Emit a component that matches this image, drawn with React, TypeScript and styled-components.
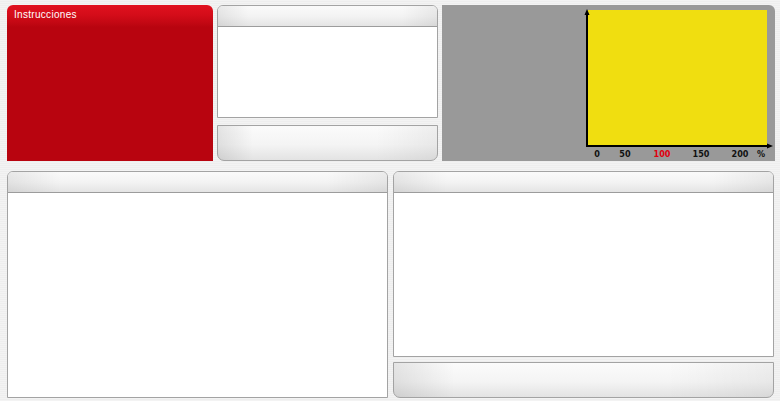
import React from "react";
import styled, { createGlobalStyle } from "styled-components";

const Global = createGlobalStyle`
  html, body { margin: 0; padding: 0; }
  body {
    width: 780px;
    height: 401px;
    overflow: hidden;
    font-family: "Liberation Sans", Arial, sans-serif;
    background: repeating-linear-gradient(to bottom, #f3f3f3 0px, #f3f3f3 1px, #eeeeee 1px, #eeeeee 2px);
  }
`;

const Page = styled.div`
  display: flex;
  flex-direction: column;
  gap: 10px;
  padding: 5px 0 0 7px;
  width: 780px;
  box-sizing: border-box;
`;

const TopRow = styled.div`
  display: flex;
  height: 156px;
`;

const BottomRow = styled.div`
  display: flex;
  gap: 5px;
  height: 227px;
`;

const RedPanel = styled.div`
  width: 206px;
  border-radius: 6px 6px 0 0;
  background: linear-gradient(to bottom, #e0111f 0px, #d40c19 10px, #c00712 19px, #b8040f 22px, #b8040f 100%);
  overflow: hidden;
`;

const RedTitle = styled.div`
  color: #ffffff;
  font-size: 10px;
  font-weight: normal;
  letter-spacing: 0.3px;
  padding: 4px 0 0 7px;
  line-height: 12px;
`;

const MidColumn = styled.div`
  width: 221px;
  margin-left: 4px;
  display: flex;
  flex-direction: column;
  gap: 7px;
`;

const Card = styled.div<{ $grow?: boolean; $w?: number }>`
  box-sizing: border-box;
  display: flex;
  flex-direction: column;
  border: 1px solid #a3a3a3;
  border-radius: 6px 6px 0 0;
  background: #ffffff;
  ${(p) => (p.$grow ? "flex: 1;" : "")}
  ${(p) => (p.$w ? `width: ${p.$w}px;` : "")}
  overflow: hidden;
`;

const CardHeader = styled.div`
  height: 20px;
  flex-shrink: 0;
  border-bottom: 1px solid #9c9c9c;
  background:
    linear-gradient(to right, rgba(0, 0, 0, 0.07) 0%, rgba(0, 0, 0, 0) 14%, rgba(0, 0, 0, 0) 84%, rgba(0, 0, 0, 0.06) 100%),
    linear-gradient(to bottom, #fafafa 0%, #f3f3f3 50%, #e4e4e4 100%);
`;

const CardBody = styled.div`
  flex: 1;
  background: #ffffff;
`;

const Bar = styled.div<{ $h: number }>`
  box-sizing: border-box;
  height: ${(p) => p.$h}px;
  border: 1px solid #a3a3a3;
  border-radius: 0 0 7px 7px;
  background:
    linear-gradient(to right, rgba(0, 0, 0, 0.09) 0%, rgba(0, 0, 0, 0) 16%, rgba(0, 0, 0, 0) 72%, rgba(0, 0, 0, 0.05) 100%),
    linear-gradient(to bottom, #fbfbfb 0%, #f4f4f4 55%, #e3e3e3 100%);
`;

const GrayPanel = styled.div`
  width: 333px;
  margin-left: 4px;
  background: #999999;
  border-radius: 0 6px 0 0;
  display: flex;
  justify-content: flex-end;
`;

const ChartSvg = styled.svg`
  display: block;
  flex-shrink: 0;
`;

const Label = styled.text<{ $red?: boolean }>`
  font-family: "DejaVu Sans Condensed", "Liberation Sans Narrow", "Liberation Sans", sans-serif;
  font-weight: bold;
  font-size: 9px;
  fill: ${(p) => (p.$red ? "#e0000f" : "#111111")};
`;

const RightColumn = styled.div`
  width: 381px;
  display: flex;
  flex-direction: column;
  gap: 5px;
`;

const Chart = () => {
  const labels: { t: string; x: number; red?: boolean }[] = [
    { t: "0", x: 17 },
    { t: "50", x: 45 },
    { t: "100", x: 82, red: true },
    { t: "150", x: 121 },
    { t: "200", x: 160 },
    { t: "%", x: 181 },
  ];
  return (
    <ChartSvg width={195} height={156} viewBox="0 0 195 156">
      <rect x={8} y={5} width={179} height={136} fill="#f0de10" />
      <line x1={7} y1={8} x2={7} y2={142} stroke="#000" strokeWidth={2} />
      <line x1={6} y1={141} x2={189} y2={141} stroke="#000" strokeWidth={2} />
      <polygon points="7,4 4.5,10 9.5,10" fill="#000" />
      <polygon points="193,141 187,138.5 187,143.5" fill="#000" />
      {labels.map((l) => (
        <Label key={l.t} x={l.x} y={152} textAnchor="middle" $red={l.red}>
          {l.t}
        </Label>
      ))}
    </ChartSvg>
  );
};

export default function App() {
  return (
    <>
      <Global />
      <Page>
        <TopRow>
          <RedPanel>
            <RedTitle>Instrucciones</RedTitle>
          </RedPanel>
          <MidColumn>
            <Card $grow>
              <CardHeader />
              <CardBody />
            </Card>
            <Bar $h={36} />
          </MidColumn>
          <GrayPanel>
            <Chart />
          </GrayPanel>
        </TopRow>
        <BottomRow>
          <Card $w={381}>
            <CardHeader />
            <CardBody />
          </Card>
          <RightColumn>
            <Card $grow>
              <CardHeader />
              <CardBody />
            </Card>
            <Bar $h={36} />
          </RightColumn>
        </BottomRow>
      </Page>
    </>
  );
}
